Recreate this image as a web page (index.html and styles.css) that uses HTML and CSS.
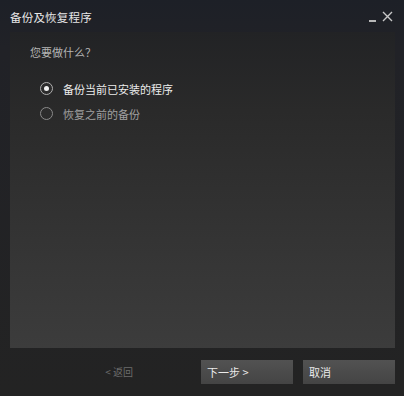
FILE: index.html
```html
<!DOCTYPE html>
<html lang="zh-CN">
<head>
    <meta charset="UTF-8">
    <title>备份及恢复程序</title>
    <link rel="stylesheet" href="styles.css">
</head>
<body>
    <div class="dialog">
        <div class="titlebar">
            <span class="title">备份及恢复程序</span>
            <div class="controls">
                <span class="min"></span>
                <svg class="close" width="11" height="11" viewBox="0 0 11 11">
                    <path d="M1 1 L10 10 M10 1 L1 10" stroke="#c8c8c8" stroke-width="1.4"/>
                </svg>
            </div>
        </div>

        <div class="panel">
            <p class="question">您要做什么？</p>
            <label class="option">
                <span class="radio checked"></span>
                <span class="label on">备份当前已安装的程序</span>
            </label>
            <label class="option">
                <span class="radio"></span>
                <span class="label">恢复之前的备份</span>
            </label>
        </div>

        <div class="footer">
            <span class="back">&lt; 返回</span>
            <button class="btn">下一步 &gt;</button>
            <button class="btn">取消</button>
        </div>
    </div>
</body>
</html>
```

FILE: styles.css
```css
* {
    box-sizing: border-box;
}

body {
    margin: 0;
    width: 404px;
    height: 396px;
    overflow: hidden;
    font-family: "Noto Sans CJK SC", "Liberation Sans", sans-serif;
    background: #1e2126;
}

.dialog {
    height: 396px;
    display: flex;
    flex-direction: column;
    background: linear-gradient(180deg, #1d2027 0%, #212227 12%, #232323 100%);
    padding: 0 9px 0 10px;
}

.titlebar {
    height: 32px;
    display: flex;
    align-items: center;
    justify-content: space-between;
    padding-top: 1px;
}

.title {
    color: #e6e6e6;
    font-size: 11.5px;
    letter-spacing: 0.2px;
}

.controls {
    display: flex;
    align-items: flex-end;
    gap: 6px;
    padding-right: 2px;
}

.min {
    width: 7px;
    height: 2px;
    background: #b8b8b8;
}

.panel {
    height: 316px;
    background: linear-gradient(180deg, #222325 0%, #2a2a2a 25%, #353535 70%, #3c3c3c 100%);
    padding: 12px 20px;
}

.question {
    margin: 0 0 16px;
    color: #b4b4b4;
    font-size: 11px;
}

.option {
    display: flex;
    align-items: center;
    gap: 10px;
    margin-left: 10px;
    height: 25px;
}

.radio {
    width: 13px;
    height: 13px;
    border-radius: 50%;
    border: 1.5px solid #8a8a8a;
    background: #2c2c2c;
    display: flex;
    align-items: center;
    justify-content: center;
}

.radio.checked {
    border-color: #b0b0b0;
}

.radio.checked::after {
    content: '';
    width: 5px;
    height: 5px;
    border-radius: 50%;
    background: #f2f2f2;
}

.label {
    color: #a0a0a0;
    font-size: 11px;
}

.label.on {
    color: #ececec;
}

.footer {
    flex: 1;
    display: flex;
    align-items: center;
    justify-content: flex-end;
    padding-bottom: 1px;
}

.back {
    color: #6c6c6c;
    font-size: 10px;
    margin-right: 58px;
}

.btn {
    width: 92px;
    height: 24px;
    margin-left: 10px;
    border: none;
    padding: 0 6px;
    text-align: left;
    font-family: inherit;
    font-size: 11px;
    color: #eaeaea;
    background: linear-gradient(180deg, #525252 0%, #444444 100%);
}
```
